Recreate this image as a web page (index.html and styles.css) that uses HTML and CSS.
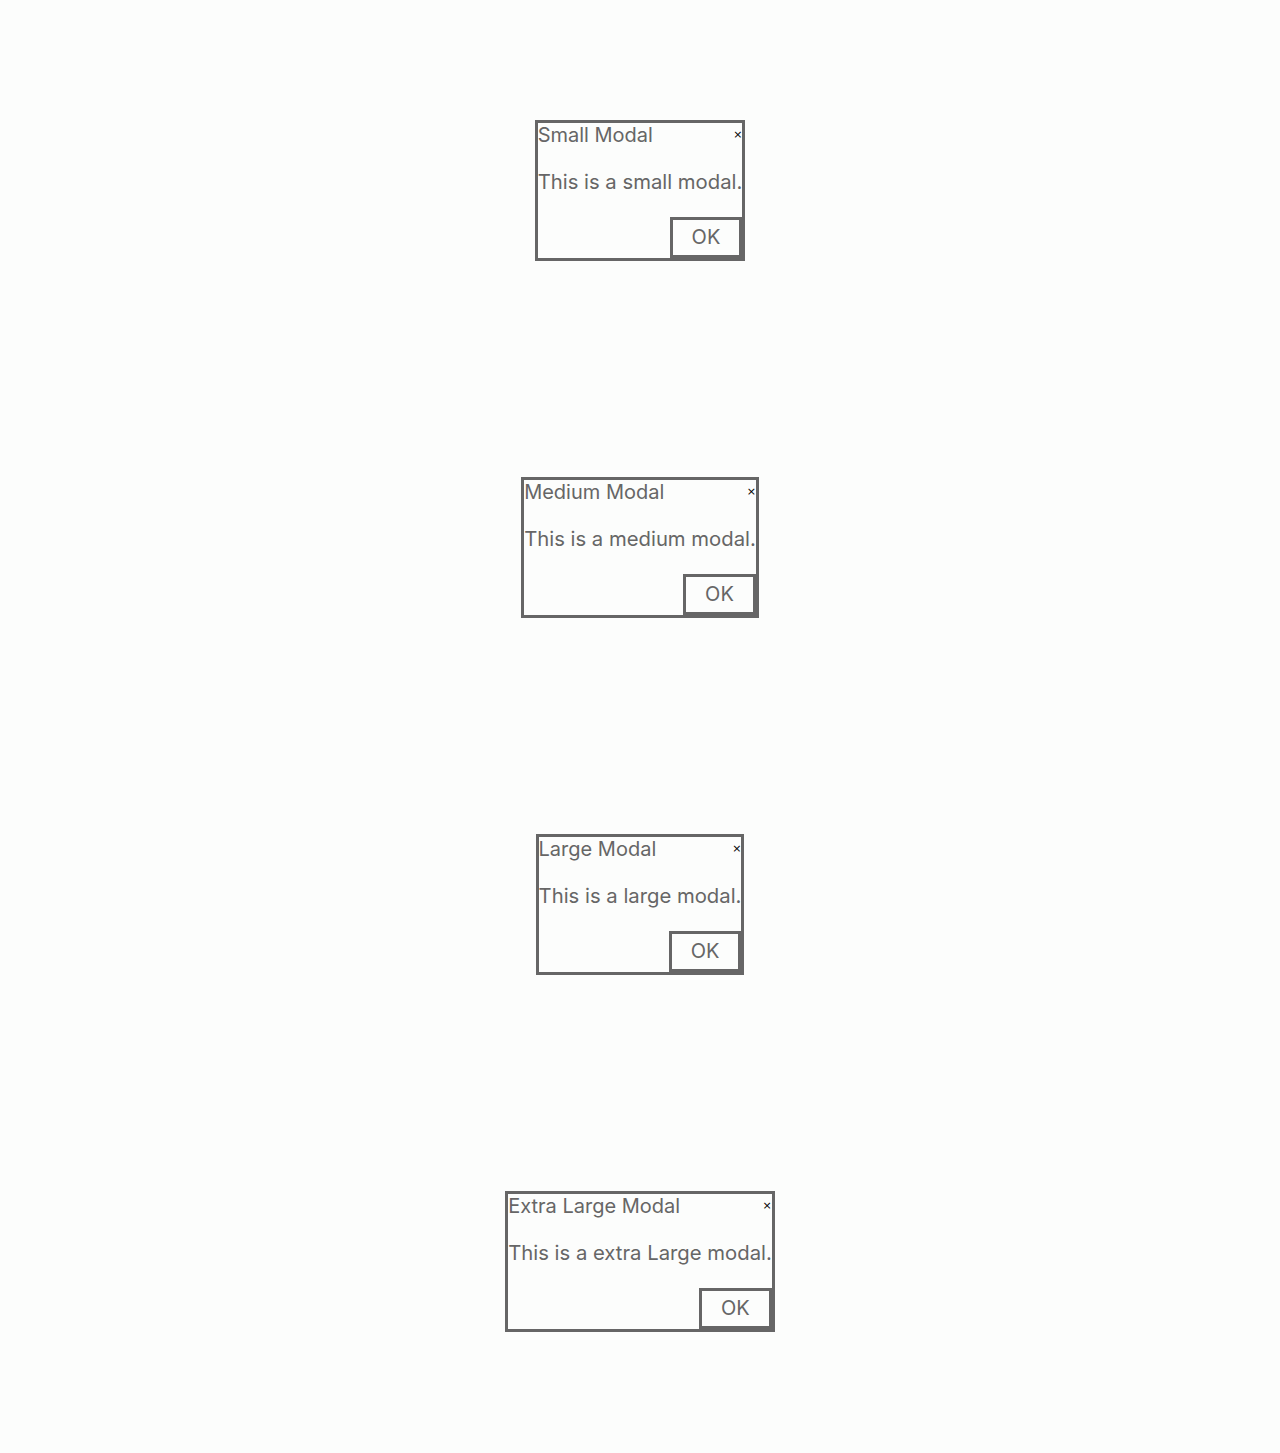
FILE: index.html
```html
<!DOCTYPE html>
<html lang="en">
<head>
<meta charset="utf-8">
<title>Modals</title>
<link rel="stylesheet" href="styles.css">
</head>
<body>
<main class="stack">
  <div class="modal" role="dialog" aria-label="Small Modal">
    <div class="modal-header">
      <span class="modal-title">Small Modal</span>
      <button class="modal-close" type="button" aria-label="Close">×</button>
    </div>
    <p class="modal-body">This is a small modal.</p>
    <div class="modal-footer"><button class="modal-ok" type="button">OK</button></div>
  </div>

  <div class="modal" role="dialog" aria-label="Medium Modal">
    <div class="modal-header">
      <span class="modal-title">Medium Modal</span>
      <button class="modal-close" type="button" aria-label="Close">×</button>
    </div>
    <p class="modal-body">This is a medium modal.</p>
    <div class="modal-footer"><button class="modal-ok" type="button">OK</button></div>
  </div>

  <div class="modal" role="dialog" aria-label="Large Modal">
    <div class="modal-header">
      <span class="modal-title">Large Modal</span>
      <button class="modal-close" type="button" aria-label="Close">×</button>
    </div>
    <p class="modal-body">This is a large modal.</p>
    <div class="modal-footer"><button class="modal-ok" type="button">OK</button></div>
  </div>

  <div class="modal" role="dialog" aria-label="Extra Large Modal">
    <div class="modal-header">
      <span class="modal-title">Extra Large Modal</span>
      <button class="modal-close" type="button" aria-label="Close">×</button>
    </div>
    <p class="modal-body">This is a extra Large modal.</p>
    <div class="modal-footer"><button class="modal-ok" type="button">OK</button></div>
  </div>
</main>
</body>
</html>
```
FILE: styles.css
```css
html, body {
  margin: 0;
  padding: 0;
  background: #fcfdfc;
}

body {
  font-family: "Inter", "Noto Sans", sans-serif;
  color: #666666;
}

.stack {
  display: flex;
  flex-direction: column;
  align-items: center;
  gap: 216px;
  padding: 120px 0;
}

.modal {
  display: flex;
  flex-direction: column;
  width: max-content;
  border: 3px solid #666666;
  background: #fcfdfc;
}

.modal-header {
  display: flex;
  align-items: center;
  justify-content: space-between;
  height: 23px;
}

.modal-title {
  font-size: 20px;
  line-height: 24px;
  color: #666666;
}

.modal-close {
  background: none;
  border: none;
  padding: 0;
  margin: 0;
  font-family: "DejaVu Sans", sans-serif;
  font-size: 11px;
  line-height: 12px;
  color: #000000;
  cursor: pointer;
}

.modal-body {
  margin: 24px 0 23px;
  font-size: 20.3px;
  line-height: 24px;
  white-space: nowrap;
}

.modal-footer {
  display: flex;
  justify-content: flex-end;
}

.modal-ok {
  background: #fcfdfc;
  border: 3px solid #666666;
  margin: 0;
  padding: 7px 19px 8px;
  font-family: "Inter", "Noto Sans", sans-serif;
  font-size: 20px;
  line-height: 20px;
  color: #666666;
  cursor: pointer;
}
```
